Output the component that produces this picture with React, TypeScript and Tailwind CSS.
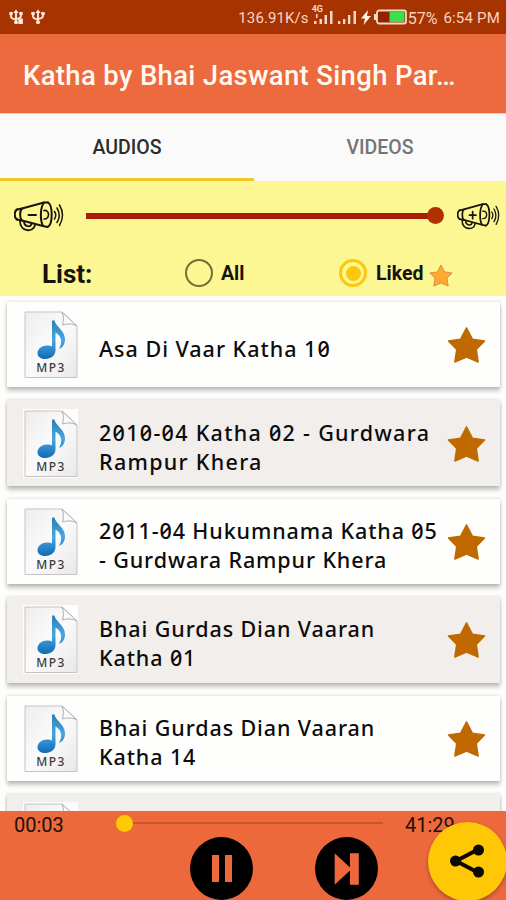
const tracks = [
  { id: 1, lines: ["Asa Di Vaar Katha 10"], tracking: "tracking-[1px]" },
  { id: 2, lines: ["2010-04 Katha 02 - Gurdwara", "Rampur Khera"], tracking: "tracking-[1.300px]" },
  { id: 3, lines: ["2011-04 Hukumnama Katha 05", "- Gurdwara Rampur Khera"], tracking: "tracking-[0.880px]" },
  { id: 4, lines: ["Bhai Gurdas Dian Vaaran", "Katha 01"], tracking: "tracking-[0.900px]" },
  { id: 5, lines: ["Bhai Gurdas Dian Vaaran", "Katha 14"], tracking: "tracking-[0.900px]" },
  { id: 6, lines: [], tracking: "" },
];

function UsbIcon({ badge = false }: { badge?: boolean }) {
  return (
    <svg width="16" height="16" viewBox="0 0 16 16" fill="none" stroke="#ffe9dc" strokeWidth="1.9">
      <path d="M8 2v12M3 4.5v3q0 2 5 3.2M13 4v3q0 2-5 3.2" />
      <path d="M5.3 4 8 .4 10.700 4zM1.300 3h3.400v3H1.300zM11.300 3h3.400v3h-3.400z" fill="#ffe9dc" stroke="none" />
      <circle cx="8" cy="13.200" r="2" fill="#ffe9dc" stroke="none" />
      {badge && <path d="M10.300 9.500h4.600v5.500h-4.600z" fill="#ffe9dc" stroke="none" />}
    </svg>
  );
}

function SignalIcon() {
  return (
    <svg width="18" height="16" viewBox="0 0 18 16" fill="#f9d9c8">
      <path d="M0 12h2.300v3H0zM5 10h2.300v5H5zM10 6h2.300v9H10zM15.500 2H18v13h-2.500z" />
    </svg>
  );
}

function StatusBar() {
  return (
    <div className="flex h-[34px] items-center bg-[#a63300] pl-2 pr-[6px] text-[#f9d5c3]">
      <UsbIcon badge />
      <span className="w-[6px]" />
      <UsbIcon />
      <span className="ml-auto mr-[4px] mt-[3px] text-[15px] tracking-[0.100px]">136.91K/s</span>
      <div className="relative mr-[5px] flex">
        <span className="absolute -left-[1px] -top-[5px] text-[9px] font-bold leading-[10px]">4G</span>
        <svg width="20" height="16" viewBox="0 0 20 16" fill="#f9d9c8">
          <path d="M1 12h2.500v3H1zM3 5h1.500v4H3zM6.500 10H9v5H6.500zM11.500 6H14v9h-2.500zM17 2h2.500v13H17z" />
        </svg>
      </div>
      <SignalIcon />
      <svg className="ml-[5px]" width="10" height="15" viewBox="0 0 10 15" fill="#fff2e9">
        <path d="M7 0 0 8.500h4L2.500 15 10 6H6z" />
      </svg>
      <svg className="ml-[2px]" width="34" height="16" viewBox="0 0 34 16">
        <path d="M4 5H1v6h3" fill="#f9d9c8" />
        <rect x="4" y="1.500" width="29" height="13" rx="2" fill="#8f2500" stroke="#f9d9c8" strokeWidth="1.800" />
        <rect x="16.500" y="3" width="15" height="10" fill="#3be04b" />
      </svg>
      <span className="ml-px mt-[3px] text-[16px]">57%</span>
      <span className="ml-[6px] mt-[3px] text-[15px] tracking-[0.200px]">6:54 PM</span>
    </div>
  );
}

function Megaphone({ plus = false }: { plus?: boolean }) {
  return (
    <svg
      className="block h-full w-full"
      viewBox="0 0 50 32"
      preserveAspectRatio="none"
      fill="none"
      stroke="#17150a"
      strokeWidth="2"
      strokeLinecap="round"
      strokeLinejoin="round"
    >
      <path d="M3 9.500 8 8.500 30 2.500h4M3 19.500 8 20.500 29 26l4.500 1" />
      <path d="M3 9.500C0 11 0 18 3 19.500M8 8.500C5.500 11 5.500 18 8 20.500" />
      <path d="M30 2.500c-4 5-4 18-1 23.500M34 2.500c5 3 5 22-.500 24.500" />
      <path d="M30 10.500c6-1 6 9 0 8.500" strokeWidth="1.600" />
      <path d="M6 21c0 11 13.500 12 15 4M10 22c.500 5 6.500 5.500 7.500 2" strokeWidth="1.800" />
      <path d="M14.500 15H22" />
      {plus && <path d="M18.200 11v8" />}
      <path d="M40.500 11.500q2.500 3.500 0 7.500M43 8q4.500 7.500 0 14.500M45.500 5q6 10 0 20.500" strokeWidth="1.500" />
    </svg>
  );
}

function Star({ className, fill, stroke }: { className: string; fill: string; stroke: string }) {
  return (
    <svg className={className} viewBox="0 0 40 38" fill={fill} stroke={stroke} strokeWidth="1.500" strokeLinejoin="round">
      <path d="M20 1.500 26 13 38.500 14.800 30 23.500 32 36.500 20 31.500 8 36.500 10 23.500 1.500 14.800 14 13z" />
    </svg>
  );
}

function Mp3Icon({ label }: { label: boolean }) {
  return (
    <div className="flex h-[69px] w-[55px] shrink-0 flex-col items-center bg-[#fdfdfd]">
      <svg width="55" height="69" viewBox="0 0 55 69">
        <defs>
          <linearGradient id="paper" x1="0" y1="0" x2="1" y2="1">
            <stop offset="0" stopColor="#ededee" />
            <stop offset="0.5" stopColor="#fbfbfb" />
            <stop offset="1" stopColor="#e8e8e9" />
          </linearGradient>
          <linearGradient id="note" x1="0" y1="0" x2="0" y2="1">
            <stop offset="0" stopColor="#2b80b5" />
            <stop offset="0.5" stopColor="#46a8e2" />
            <stop offset="1" stopColor="#126ab5" />
          </linearGradient>
        </defs>
        <path d="M2 2h37l15 14v51.500H2z" fill="url(#paper)" stroke="#c4c4c4" />
        <path d="M39 2c2 4 1.500 9 .500 13 5-1.500 10-1.500 14.500 1z" fill="#fafafa" stroke="#adadad" />
        <path
          d="M29 10.500h2.500c1 6 10.500 10 10.500 19 0 4-2 8-6 9.500 3-5 4-12-3.500-16.500V40c0 5.500-4.500 9-10 9-4.500 0-8-2-8-5.800 0-5 5.500-8.400 11-7.700 1.500.1 2.500.5 3.500 1z"
          fill="url(#note)"
        />
        {label && (
          <text x="28" y="61.500" textAnchor="middle" fontSize="12" letterSpacing="1.500" fontWeight="500" fill="#3c3c3c" fontFamily="Noto Sans, sans-serif">
            MP3
          </text>
        )}
      </svg>
    </div>
  );
}

function TrackCard({ lines, tracking, shaded }: { lines: string[]; tracking: string; shaded: boolean }) {
  return (
    <div
      className={`flex h-[85.400px] shrink-0 items-center pl-4 pr-[14px] shadow-[0_4px_4px_rgba(0,0,0,0.22),0_0_3px_rgba(0,0,0,0.18)] ${
        shaded ? "bg-[#f1eeec]" : "bg-[#fefefd]"
      }`}
    >
      <Mp3Icon label={lines.length > 0} />
      <div
        className={`ml-[21px] mt-[7px] min-w-0 flex-1 whitespace-nowrap font-['Noto_Sans',sans-serif] text-[21.500px] font-medium leading-[29px] text-[#0c0c0c] [font-feature-settings:'zero'] ${tracking}`}
      >
        {lines.map((line) => (
          <p key={line}>{line}</p>
        ))}
      </div>
      <Star className="mt-[1px] h-[38px] w-[39px] shrink-0" fill="#bf6900" stroke="#bf6900" />
    </div>
  );
}

function Player() {
  return (
    <div className="relative h-[89px] bg-[#ed693c] text-[#1c1008]">
      <div className="flex h-[26px] items-center pl-[14px] text-[20px]">
        <span className="w-[102px] pt-[1px]">00:03</span>
        <div className="-mt-[2px] flex w-[267px] items-center">
          <span className="size-[17px] rounded-full bg-[#ffc905]" />
          <span className="h-[2px] flex-1 bg-[#c85631]" />
        </div>
        <span className="ml-[22px] pt-[1px]">41:29</span>
      </div>
      <div className="flex gap-[62px] pl-[190px]">
        <button className="flex size-[63px] items-center justify-center gap-[6px] rounded-full bg-black">
          <span className="h-[27px] w-[7px] bg-[#ed693c]" />
          <span className="h-[27px] w-[7px] bg-[#ed693c]" />
        </button>
        <button className="size-[63px] rounded-full bg-black">
          <svg width="63" height="63" viewBox="0 0 64 64" fill="#ed693c">
            <path d="M20 16.500 35.500 31V16.500h9v32h-9V34L20 48.500z" />
          </svg>
        </button>
      </div>
      <button className="absolute right-[-0.500px] top-[10.500px] flex size-[79px] items-center justify-center rounded-full bg-[#ffc705] shadow-[0_2px_4px_rgba(0,0,0,0.3)]">
        <svg width="36" height="36" viewBox="0 0 36 36" fill="#0d0900">
          <path d="M7 18 29 6.500M7 18l22 11.500" stroke="#0d0900" strokeWidth="4" />
          <circle cx="6.500" cy="18" r="5.500" />
          <circle cx="29.500" cy="7" r="5.500" />
          <circle cx="29.500" cy="29" r="5.500" />
        </svg>
      </button>
    </div>
  );
}

export default function App() {
  return (
    <div className="flex h-[900px] w-[506px] flex-col overflow-hidden bg-[#fdfdfc] font-['Roboto',sans-serif]">
      <StatusBar />

      {/* Title */}
      <header className="flex h-[79px] shrink-0 items-center bg-[#ed693e] pl-[23px] pt-[5px]">
        <h1 className="whitespace-nowrap text-[27.500px] font-medium tracking-[0.330px] text-[#fff9ee]">Katha by Bhai Jaswant Singh Par…</h1>
      </header>

      {/* Tabs */}
      <nav className="flex h-[68px] shrink-0 border-t border-[#e9cfc8] bg-[#fafafa] text-[19.500px] font-medium">
        <div className="flex w-[254px] items-center justify-center border-b-[3px] border-[#efc823] pt-[4px] text-[#2c2c2c]">AUDIOS</div>
        <div className="flex flex-1 items-center justify-center pt-[1px] text-[#757575]">VIDEOS</div>
      </nav>

      <section className="h-[115px] shrink-0 bg-[#fcf693]">
        {/* Volume */}
        <div className="flex h-[69px] items-center">
          <div className="ml-[14px] h-[32px] w-[50px]">
            <Megaphone />
          </div>
          <div className="ml-[22px] flex w-[358px] items-center">
            <div className="h-[6px] flex-1 bg-[#a91c08]" />
            <div className="-ml-px size-[17px] rounded-full bg-[#ae3003]" />
          </div>
          <div className="ml-[13px] h-[28px] w-[43px]">
            <Megaphone plus />
          </div>
        </div>
        {/* Filter */}
        <div className="flex h-[46px] items-center text-[20px] font-bold text-[#15130b]">
          <span className="ml-[42px] w-[143px] pt-[3px] text-[26px]">List:</span>
          <span className="size-[28px] rounded-full border-[2.500px] border-[#766d2f]" />
          <span className="ml-[8px] w-[118px] pt-[2px] text-[19.500px]">All</span>
          <span className="flex size-[28px] items-center justify-center rounded-full border-[3px] border-[#fcc70d]">
            <span className="size-[15px] rounded-full bg-[#fcc70d]" />
          </span>
          <span className="ml-[9px] w-[53px] pt-[2px] text-[19.500px]">Liked</span>
          <Star className="mt-[4px] h-[23px] w-[24px]" fill="#ffa932" stroke="#d08a3c" />
        </div>
      </section>

      <main className="flex min-h-0 flex-1 flex-col gap-[13px] overflow-hidden pl-[7px] pr-[6px] pt-[6px]">
        {tracks.map((track, i) => (
          <TrackCard key={track.id} lines={track.lines} tracking={track.tracking} shaded={i % 2 === 1} />
        ))}
      </main>

      <Player />
    </div>
  );
}
